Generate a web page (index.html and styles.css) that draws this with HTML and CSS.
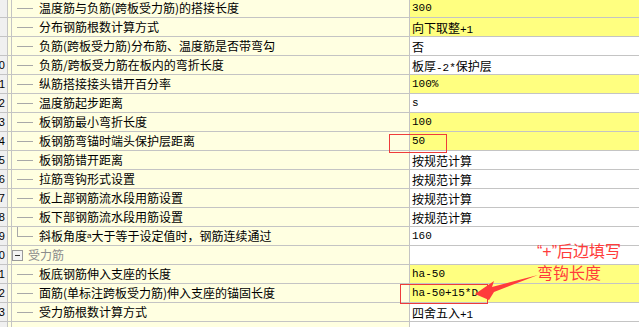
FILE: index.html
```html
<!DOCTYPE html>
<html lang="zh-CN">
<head>
<meta charset="utf-8">
<title>板钢筋设置</title>
<link rel="stylesheet" href="styles.css">
</head>
<body>
<div class="sheet">
  <div class="row"><div class="num"></div><div class="pad"></div><div class="name"><i class="conn"></i>温度筋与负筋(跨板受力筋)的搭接长度</div><div class="val hl"><span class="l">300</span></div></div>
  <div class="row"><div class="num"></div><div class="pad"></div><div class="name"><i class="conn"></i>分布钢筋根数计算方式</div><div class="val hl">向下取整<span class="l">+1</span></div></div>
  <div class="row"><div class="num"></div><div class="pad"></div><div class="name"><i class="conn"></i>负筋(跨板受力筋)分布筋、温度筋是否带弯勾</div><div class="val">否</div></div>
  <div class="row"><div class="num">10</div><div class="pad"></div><div class="name"><i class="conn"></i>负筋/跨板受力筋在板内的弯折长度</div><div class="val">板厚<span class="l">-2*</span>保护层</div></div>
  <div class="row"><div class="num">11</div><div class="pad"></div><div class="name"><i class="conn"></i>纵筋搭接接头错开百分率</div><div class="val hl"><span class="l">100%</span></div></div>
  <div class="row"><div class="num">12</div><div class="pad"></div><div class="name"><i class="conn"></i>温度筋起步距离</div><div class="val"><span class="l">s</span></div></div>
  <div class="row"><div class="num">13</div><div class="pad"></div><div class="name"><i class="conn"></i>板钢筋最小弯折长度</div><div class="val hl"><span class="l">100</span></div></div>
  <div class="row"><div class="num">14</div><div class="pad"></div><div class="name"><i class="conn"></i>板钢筋弯锚时端头保护层距离</div><div class="val hl"><span class="l">50</span></div></div>
  <div class="row"><div class="num">15</div><div class="pad"></div><div class="name"><i class="conn"></i>板钢筋错开距离</div><div class="val">按规范计算</div></div>
  <div class="row"><div class="num">16</div><div class="pad"></div><div class="name"><i class="conn"></i>拉筋弯钩形式设置</div><div class="val">按规范计算</div></div>
  <div class="row"><div class="num">17</div><div class="pad"></div><div class="name"><i class="conn"></i>板上部钢筋流水段用筋设置</div><div class="val">按规范计算</div></div>
  <div class="row"><div class="num">18</div><div class="pad"></div><div class="name"><i class="conn"></i>板下部钢筋流水段用筋设置</div><div class="val">按规范计算</div></div>
  <div class="row"><div class="num">19</div><div class="pad"></div><div class="name"><i class="conn last"></i>斜板角度<span class="small">a</span>大于等于设定值时，钢筋连续通过</div><div class="val"><span class="l">160</span></div></div>
  <div class="row"><div class="num">20</div><div class="pad"></div><div class="name group"><i class="toggle"></i>受力筋</div><div class="val"></div></div>
  <div class="row"><div class="num">21</div><div class="pad"></div><div class="name"><i class="conn"></i>板底钢筋伸入支座的长度</div><div class="val hl"><span class="l">ha-50</span></div></div>
  <div class="row"><div class="num">22</div><div class="pad"></div><div class="name"><i class="conn"></i>面筋(单标注跨板受力筋)伸入支座的锚固长度</div><div class="val hl"><span class="l">ha-50+15*D</span></div></div>
  <div class="row"><div class="num">23</div><div class="pad"></div><div class="name"><i class="conn"></i>受力筋根数计算方式</div><div class="val">四舍五入<span class="l">+1</span></div></div>
  <div class="row"><div class="num">24</div><div class="pad"></div><div class="name"><i class="conn"></i></div><div class="val"></div></div>

  <div class="mark mark-a"></div>
  <div class="mark mark-b"></div>
  <div class="note"><span class="q">“+”</span>后边填写<br>弯钩长度</div>
  <svg class="arrow" width="639" height="327" viewBox="0 0 639 327">
    <polygon points="475,294 494,281 492,287 538,275 494,292 489,300" fill="#ff3b3b"/>
  </svg>
</div>
</body>
</html>
```
FILE: styles.css
```css
html, body {
  margin: 0;
  padding: 0;
  background: #ffffff;
  overflow: hidden;
}

.sheet {
  position: relative;
  width: 639px;
  height: 328px;
  margin-top: -1px;
  font-family: "Noto Sans CJK SC", sans-serif;
  font-size: 12px;
  color: #000;
}

.row {
  display: flex;
  height: 18px;
  border-bottom: 1px solid #c4c4c4;
}

.num {
  width: 5px;
  padding-right: 2px;
  border-right: 1px solid #c4c4c4;
  background: #f0f0f0;
  display: flex;
  justify-content: flex-end;
  align-items: center;
  overflow: hidden;
  white-space: nowrap;
  font-family: "Liberation Sans", sans-serif;
  font-size: 11px;
}

.pad {
  width: 3px;
  border-right: 1px solid #c4c4c4;
  background: #ffffe1;
}

.name {
  width: 397px;
  border-right: 1px solid #c4c4c4;
  background: #ffffe1;
  display: flex;
  align-items: center;
  white-space: nowrap;
  overflow: hidden;
  line-height: 18px;
}

.conn {
  display: block;
  flex: none;
  width: 16px;
  height: 1px;
  margin-left: 5px;
  margin-right: 6px;
  background: #a8a8a8;
}

.conn.last {
  align-self: flex-start;
  width: 15px;
  height: 9px;
  background: none;
  border-left: 1px solid #a8a8a8;
  border-bottom: 1px solid #a8a8a8;
}

.small {
  font-family: "Liberation Sans", sans-serif;
  font-size: 8px;
}

.group {
  color: #8c8c8c;
}

.toggle {
  display: block;
  flex: none;
  position: relative;
  width: 9px;
  height: 9px;
  border: 1px solid #9a9a9a;
  background: #f4f4f4;
  margin-right: 5px;
}

.toggle::after {
  content: "";
  position: absolute;
  left: 2px;
  top: 4px;
  width: 5px;
  height: 1px;
  background: #333;
}

.val {
  flex: 1;
  padding-left: 2px;
  display: flex;
  align-items: baseline;
  padding-top: 2px;
  box-sizing: border-box;
  line-height: 15px;
  white-space: nowrap;
  background: #ffffff;
}

.val.hl {
  background: #ffff80;
}

.l {
  font-family: "Liberation Mono", monospace;
  font-size: 11px;
}

.mark {
  position: absolute;
  border: 1px solid #ee3b3b;
}

.mark-a {
  left: 389px;
  top: 135px;
  width: 56px;
  height: 17px;
}

.mark-b {
  left: 400px;
  top: 285px;
  width: 86px;
  height: 18px;
}

.note {
  position: absolute;
  left: 537px;
  top: 241px;
  color: #ff3b3b;
  font-size: 16px;
  line-height: 20px;
  white-space: nowrap;
}

.q {
  font-family: "Liberation Sans", sans-serif;
}

.arrow {
  position: absolute;
  left: 0;
  top: 1px;
  pointer-events: none;
}
```
